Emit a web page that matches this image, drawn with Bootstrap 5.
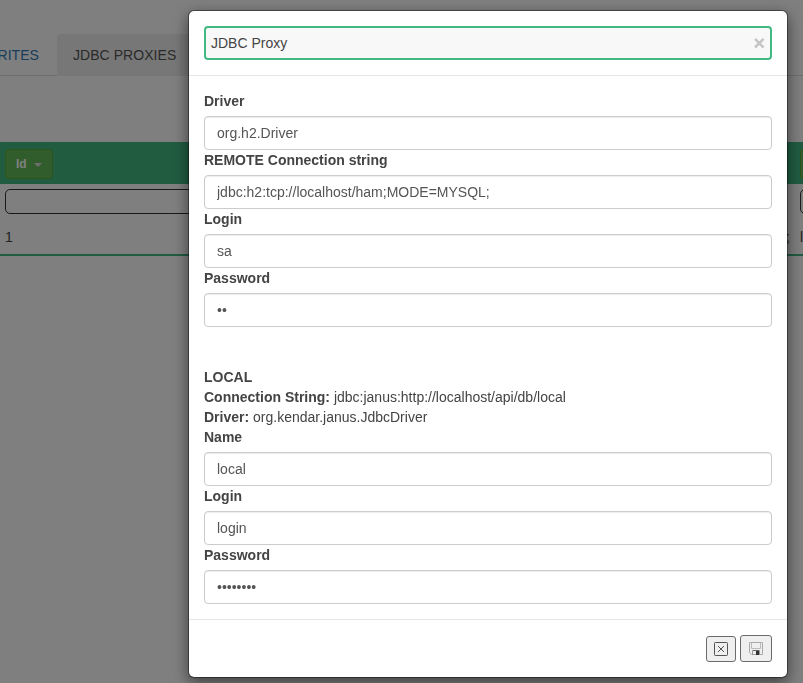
<!DOCTYPE html>
<html lang="en">
<head>
<meta charset="utf-8">
<meta name="viewport" content="width=device-width, initial-scale=1">
<title>JDBC Proxies</title>
<link href="https://cdn.jsdelivr.net/npm/bootstrap@5.3.0/dist/css/bootstrap.min.css" rel="stylesheet">
<style>
html, body { height: 100%; overflow: hidden; }
body { font: 14px/20px "Liberation Sans", Arial, sans-serif; color: #444; background: #fff; }
.page { height: 683px; padding-top: 34px; overflow: hidden; }
.page-tabs { height: 42px; border-bottom: 1px solid #ddd; font-size: 14px; }
.page-tabs .nav-link { padding: 11px 16px; height: 42px; line-height: 21px; border: 0; letter-spacing: .05px; border-radius: 4px 4px 0 0; white-space: nowrap; }
.page-tabs .tab-fav { width: 57px; color: #337ab7; padding-left: 0; display: flex; justify-content: flex-end; padding-right: 18px; }
.page-tabs .nav-link.active { background: #eee; color: #555; }
.grid { margin-top: 66px; border-bottom: 2px solid #42b983; height: 114px; }
.grid-head { height: 42px; background: #42b983; padding: 7px 5px; }
.sort { width: 48px; height: 30px; border: 1px solid #56a83e; border-radius: 3px; background: #61ba56; color: #fff; font-size: 12px; font-weight: bold; padding: 0 10px; line-height: 18px; }
.head-left { width: 795px; }
.caret { border: 4px solid transparent; border-top-color: #ddd; border-bottom: 0; margin-left: 7px; margin-top: 2px; }
.filter { height: 25px; margin-top: 5px; border: 1px solid #333; border-radius: 5px; background: #fff; }
.filter-main { width: 781px; margin-left: 5px; }
.filter-next { width: 70px; margin-left: 14px; }
.cell-main { width: 790px; padding-left: 5px; }
.cell-next { margin-left: 10px; }
.cells { margin-top: 13px; }
.modal-dialog { width: 600px; max-width: none; margin: 10px 0 0 188px; }
.modal-content { border: 1px solid rgba(0,0,0,.4); border-radius: 6px; box-shadow: 0 5px 15px rgba(0,0,0,.5); color: #444; }
.modal-header, .modal-body, .modal-footer { padding: 15px; border-color: #e5e5e5; }
.titlebar { height: 34px; border: 2px solid #42b983; border-radius: 4px; background: #f8f8f8; padding: 0 5px; }
.modal-body label, .modal-body b { font-weight: bold; }
.modal-body label { display: block; margin-bottom: 5px; }
.modal-body .form-control { height: 34px; padding: 6px 12px; font-size: 14px; line-height: 20px; color: #555; border: 1px solid #ccc; border-radius: 4px; box-shadow: inset 0 1px 1px rgba(0,0,0,.075); }
.remote { margin-bottom: 40px; }
.modal-footer { height: 58px; gap: 4px; }
.modal-footer > * { margin: 0; }
.tool { height: 26px; width: 30px; border: 1px solid #6b6b6b; border-radius: 3px; background: #efefef; padding: 0; }
.tool.save { width: 32px; height: 27px; }
</style>
<script src="https://cdn.jsdelivr.net/npm/bootstrap@5.3.0/dist/js/bootstrap.bundle.min.js"></script>
</head>
<body>
<div class="page">
  <nav class="nav page-tabs flex-nowrap">
    <a class="nav-link tab-fav" href="#">FAVORITES</a>
    <a class="nav-link active" href="#">JDBC PROXIES</a>
  </nav>
  <div class="grid">
    <div class="grid-head d-flex">
      <div class="head-left flex-shrink-0"><button class="sort d-flex align-items-center">Id<span class="caret"></span></button></div>
      <button class="sort flex-shrink-0" aria-label="Sort"></button>
    </div>
    <div class="d-flex">
      <div class="filter filter-main flex-shrink-0"></div>
      <div class="filter filter-next flex-shrink-0"></div>
    </div>
    <div class="d-flex cells">
      <div class="cell-main flex-shrink-0 d-flex justify-content-between"><span>1</span><span>;</span></div>
      <span class="cell-next flex-shrink-0">local</span>
    </div>
  </div>
</div>
<div class="modal-backdrop show"></div>
<div class="modal d-block overflow-hidden" tabindex="-1">
  <div class="modal-dialog">
    <div class="modal-content">
      <div class="modal-header">
        <div class="titlebar d-flex align-items-center justify-content-between w-100">
          <span>JDBC Proxy</span>
          <svg width="11" height="11" viewBox="0 0 11 11"><path d="M1 .9l8.600 8.600M9.600 .9L1 9.500" stroke="#c5c5c5" stroke-width="2.500"/></svg>
        </div>
      </div>
      <div class="modal-body">
        <div class="remote">
          <label for="driver">Driver</label>
          <input id="driver" class="form-control" value="org.h2.Driver">
          <label for="remote">REMOTE Connection string</label>
          <input id="remote" class="form-control" value="jdbc:h2:tcp://localhost/ham;MODE=MYSQL;">
          <label for="rlogin">Login</label>
          <input id="rlogin" class="form-control" value="sa">
          <label for="rpass">Password</label>
          <input id="rpass" type="password" class="form-control" value="sa">
        </div>
        <div><b>LOCAL</b></div>
        <div><b>Connection String:</b> jdbc:janus:http://localhost/api/db/local</div>
        <div><b>Driver:</b> org.kendar.janus.JdbcDriver</div>
        <label for="name">Name</label>
        <input id="name" class="form-control" value="local">
        <label for="login">Login</label>
        <input id="login" class="form-control" value="login">
        <label for="pass">Password</label>
        <input id="pass" type="password" class="form-control" value="password">
      </div>
      <div class="modal-footer align-items-end flex-nowrap">
        <button class="tool d-flex align-items-center justify-content-center" aria-label="Cancel">
          <svg width="14" height="14" viewBox="0 0 14 14" fill="none" stroke="#555"><rect x=".5" y=".5" width="13" height="13" rx=".8"/><path d="M4 4l6 6M10 4l-6 6"/></svg>
        </button>
        <button class="tool save d-flex align-items-center justify-content-center" aria-label="Save">
          <svg width="14" height="13" viewBox="0 0 14 13" fill="none"><path d="M.5.5h13v12h-11l-2-2z" stroke="#aaa"/><path d="M2.500.5v6h9v-6" stroke="#bbb"/><path d="M3.500 13v-4.500h7v4.500" stroke="#999"/><path d="M4 8h6v1H4z" fill="#666"/><path d="M7 9h3v4H7z" fill="#333"/></svg>
        </button>
      </div>
    </div>
  </div>
</div>
</body>
</html>
